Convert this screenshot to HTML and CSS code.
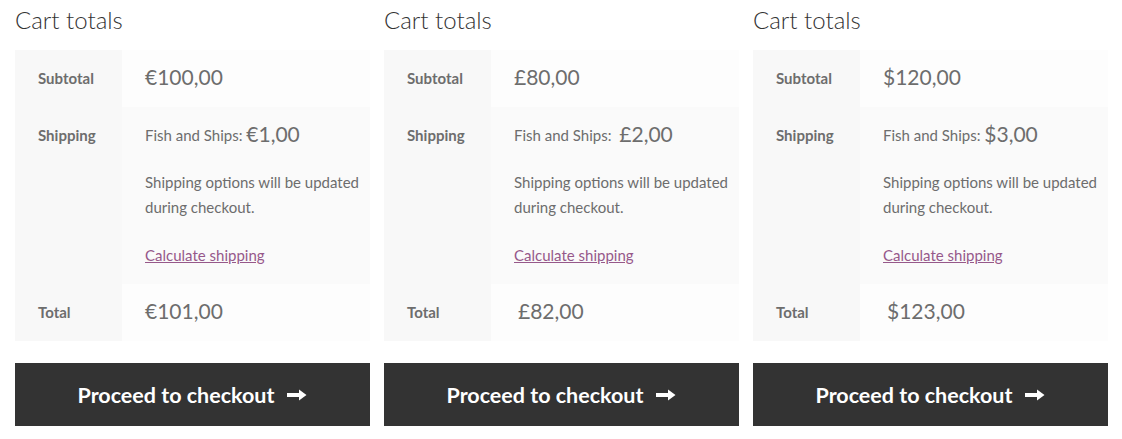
FILE: index.html
```html
<!DOCTYPE html>
<html>
<head>
<meta charset="utf-8">
<link rel="stylesheet" href="styles.css">
</head>
<body>
<div class="cols">
  <div class="cart">
    <h2 class="title">Cart totals</h2>
    <table class="totals">
      <tr class="r-sub"><th>Subtotal</th><td><span class="amt">€100,00</span></td></tr>
      <tr class="r-ship"><th>Shipping</th><td>
        <div class="method">Fish and Ships: <span class="amt">€1,00</span></div>
        <p class="dest">Shipping options will be updated during checkout.</p>
        <a class="calc" href="#">Calculate shipping</a>
      </td></tr>
      <tr class="r-total"><th>Total</th><td><span class="amt">€101,00</span></td></tr>
    </table>
    <a class="btn" href="#">Proceed to checkout <svg class="arrow" width="20" height="12" viewBox="0 0 20 12"><path d="M0 4h12V0.5l7.5 5.5-7.5 5.5V8H0z" fill="#fff"/></svg></a>
  </div>
  <div class="cart">
    <h2 class="title">Cart totals</h2>
    <table class="totals">
      <tr class="r-sub"><th>Subtotal</th><td><span class="amt">£80,00</span></td></tr>
      <tr class="r-ship"><th>Shipping</th><td>
        <div class="method">Fish and Ships: <span class="amt gap">£2,00</span></div>
        <p class="dest">Shipping options will be updated during checkout.</p>
        <a class="calc" href="#">Calculate shipping</a>
      </td></tr>
      <tr class="r-total"><th>Total</th><td><span class="amt ind">£82,00</span></td></tr>
    </table>
    <a class="btn" href="#">Proceed to checkout <svg class="arrow" width="20" height="12" viewBox="0 0 20 12"><path d="M0 4h12V0.5l7.5 5.5-7.5 5.5V8H0z" fill="#fff"/></svg></a>
  </div>
  <div class="cart">
    <h2 class="title">Cart totals</h2>
    <table class="totals">
      <tr class="r-sub"><th>Subtotal</th><td><span class="amt">$120,00</span></td></tr>
      <tr class="r-ship"><th>Shipping</th><td>
        <div class="method">Fish and Ships: <span class="amt">$3,00</span></div>
        <p class="dest">Shipping options will be updated during checkout.</p>
        <a class="calc" href="#">Calculate shipping</a>
      </td></tr>
      <tr class="r-total"><th>Total</th><td><span class="amt ind">$123,00</span></td></tr>
    </table>
    <a class="btn" href="#">Proceed to checkout <svg class="arrow" width="20" height="12" viewBox="0 0 20 12"><path d="M0 4h12V0.5l7.5 5.5-7.5 5.5V8H0z" fill="#fff"/></svg></a>
  </div>
</div>
</body>
</html>
```
FILE: styles.css
```css
html, body {
  margin: 0;
  padding: 0;
  background: #fff;
}
body {
  font-family: Lato, "Open Sans", sans-serif;
  color: #6d6d6d;
  font-size: 15px;
}
.cols {
  display: flex;
  gap: 14px;
  padding-left: 15px;
}
.cart {
  width: 355px;
}
.title {
  margin: 0 0 10px 0;
  height: 40px;
  line-height: 40px;
  font-size: 24px;
  font-weight: 300;
  color: #333;
}
.totals {
  width: 355px;
  border-collapse: collapse;
  border-spacing: 0;
}
.totals th, .totals td {
  padding: 16px 0 16px 23px;
  line-height: 25px;
  vertical-align: top;
  text-align: left;
}
.totals th {
  width: 84px;
  background: #f8f8f8;
  font-weight: 700;
  font-size: 15px;
  color: #6d6d6d;
}
.totals td {
  background: #fdfdfd;
}
.r-ship td {
  background: #fafafa;
}
.amt {
  font-size: 21px;
  line-height: 0;
  vertical-align: -1px;
  color: #6d6d6d;
}
.gap { margin-left: 4px; }
.ind { margin-left: 4px; }
.method {
  margin: 0 0 22px 0;
}
.dest {
  margin: 0 0 23px 0;
  padding-right: 4px;
}
.calc {
  color: #96588a;
  text-decoration: underline;
}
.btn {
  display: flex;
  align-items: center;
  justify-content: center;
  gap: 13px;
  margin-top: 22px;
  height: 63px;
  background: #333;
  color: #fff;
  text-decoration: none;
  font-weight: 700;
  font-size: 21.5px;
}
.arrow {
  display: block;
}
```
